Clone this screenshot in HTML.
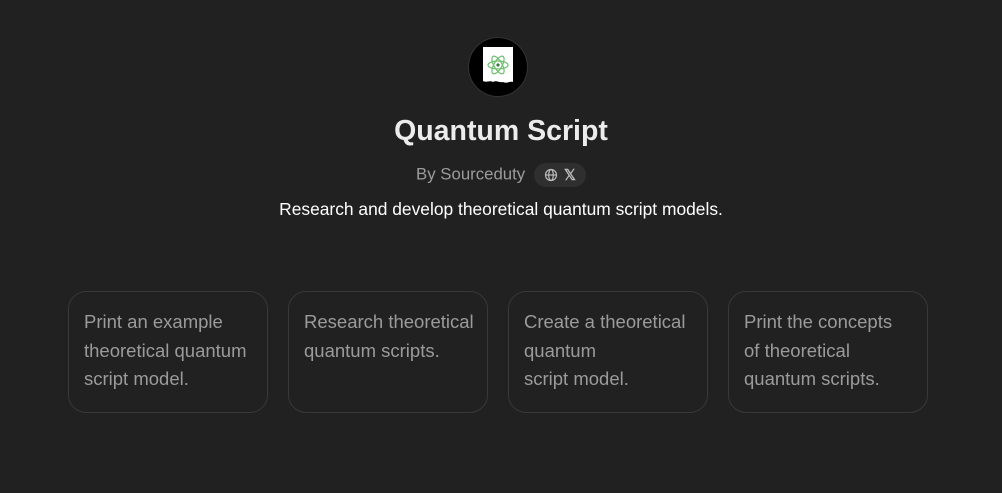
<!DOCTYPE html>
<html><head><meta charset="utf-8"><style>
body{margin:0;background:#212121;width:1002px;height:493px;overflow:hidden;font-family:"Liberation Sans",sans-serif;color:#ececec}
.logo{position:absolute;left:468px;top:37px;width:58px;height:58px;border-radius:50%;background:#000;border:1px solid #333}
h1{position:absolute;top:115px;left:0;width:1002px;text-align:center;margin:0;font-size:28.5px;font-weight:bold;color:#ececec}
.by{position:absolute;top:163px;left:0;width:1002px;text-align:center;font-size:16.8px;color:#9b9b9b}
.pill{display:inline-flex;align-items:center;gap:6px;background:#2f2f2f;border-radius:12px;padding:2px 10px;height:20px;vertical-align:middle;margin-left:4px;color:#bbb;font-size:15px}
.desc{position:absolute;top:199px;left:0;width:1002px;text-align:center;font-size:17.4px;color:#fff}
.card{position:absolute;top:291px;width:170px;height:90px;border:1px solid #383838;border-radius:18px;padding:16px 13px 14px 15px;font-size:18.5px;line-height:28.5px;color:#9b9b9b;white-space:nowrap;overflow:hidden}
</style></head><body>
<div class="logo"><svg width="58" height="58" viewBox="0 0 58 58">
<path d="M14 9 H44 V44 C40 43 38 46 34 44 C30 45 28 42 24 44 C20 42 18 45 14 43 Z" fill="#fff"/>
<g fill="none" stroke="#6cbd6c" stroke-width="1.2"><ellipse cx="29" cy="27" rx="10" ry="4"/><ellipse cx="29" cy="27" rx="10" ry="4" transform="rotate(60 29 27)"/><ellipse cx="29" cy="27" rx="10" ry="4" transform="rotate(-60 29 27)"/></g>
<circle cx="29" cy="27" r="1.6" fill="#3a7a3a"/></svg></div>
<h1>Quantum Script</h1>
<div class="by">By Sourceduty <span class="pill"><svg width="14" height="14" viewBox="0 0 14 14" fill="none" stroke="#bbb" stroke-width="1.2"><circle cx="7" cy="7" r="5.5"/><ellipse cx="7" cy="7" rx="2.3" ry="5.5"/><path d="M1.5 7H12.5"/></svg><span style="font-weight:bold">𝕏</span></span></div>
<div class="desc">Research and develop theoretical quantum script models.</div>
<div class="card" style="left:68px">Print an example<br>theoretical quantum<br>script model.</div>
<div class="card" style="left:288px">Research theoretical<br>quantum scripts.</div>
<div class="card" style="left:508px">Create a theoretical<br>quantum<br>script model.</div>
<div class="card" style="left:728px">Print the concepts<br>of theoretical<br>quantum scripts.</div>
</body></html>
